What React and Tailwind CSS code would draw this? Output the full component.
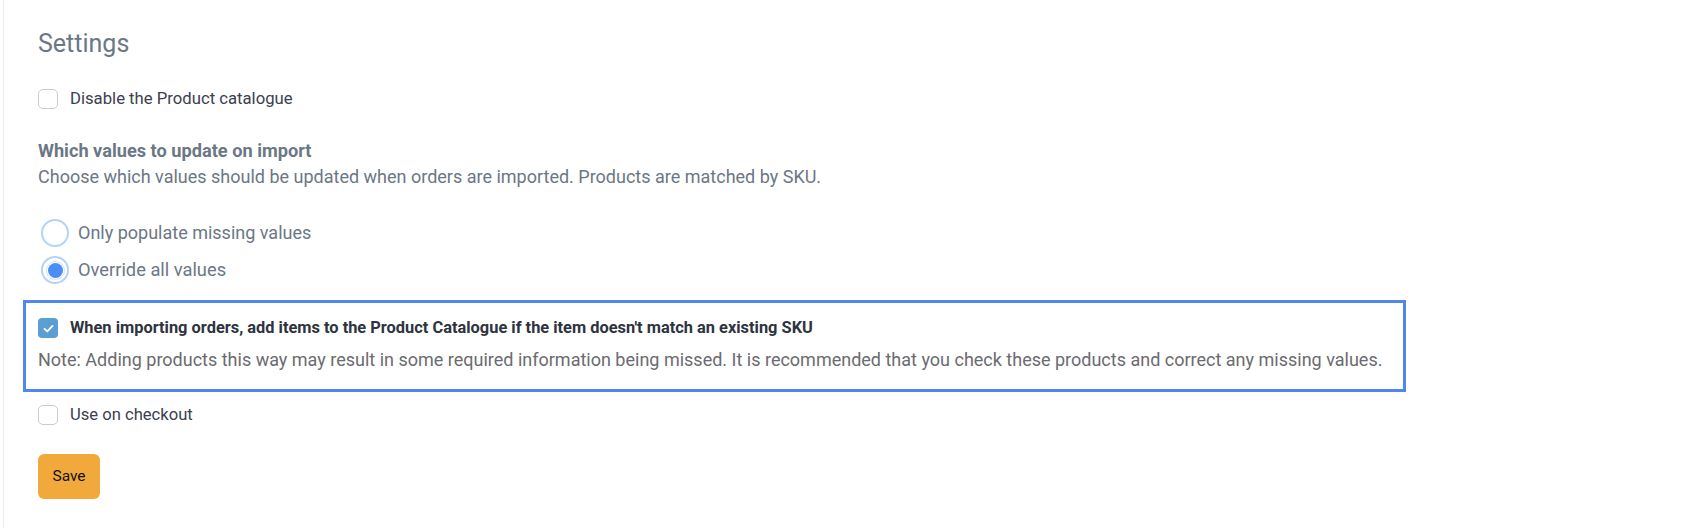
import React from "react";

function Check({ checked }) {
  if (checked) {
    return (
      <span className="flex h-[20px] w-[20px] shrink-0 items-center justify-center rounded-[4px] bg-[#5a9fd4]">
        <svg width="13" height="13" viewBox="0 0 12 12" fill="none">
          <path d="M2.3 6.3 L4.9 8.7 L9.7 3.6" stroke="white" strokeWidth="1.7" strokeLinecap="round" strokeLinejoin="round" />
        </svg>
      </span>
    );
  }
  return <span className="block h-[20px] w-[20px] shrink-0 rounded-[5px] border-[1.5px] border-[#c6ccd3] bg-white" />;
}

function Radio({ checked }) {
  return (
    <span className="flex h-[28px] w-[28px] shrink-0 items-center justify-center rounded-full border-[2px] border-[#b5d3fa] bg-white">
      {checked && (
        <span className="flex h-[19px] w-[19px] items-center justify-center rounded-full border-[1px] border-[#d3e3f7]">
          <span className="block h-[15px] w-[15px] rounded-full bg-[#4b8df5]" />
        </span>
      )}
    </span>
  );
}

export default function App() {
  return (
    <div className="h-[528px] w-[1682px] bg-white font-['Roboto',sans-serif]">
      <div className="ml-[3px] h-full border-l border-[#ededed] pl-[34px] pt-[28px]">
        <h2 className="text-[25px] leading-[32px] text-[#6b7785]">Settings</h2>
        <label className="mt-[29px] flex h-[20px] items-center gap-[12px]">
          <Check />
          <span className="text-[16.7px] leading-[20px] text-[#3b4050]">Disable the Product catalogue</span>
        </label>
        <div className="mt-[29px]">
          <div className="text-[18.2px] font-bold leading-[26px] text-[#6b7785]">Which values to update on import</div>
          <div className="text-[18px] leading-[26px] text-[#6b7785]">
            Choose which values should be updated when orders are imported. Products are matched by SKU.
          </div>
        </div>
        <div className="mt-[29px] flex flex-col gap-[9px] pl-[3px]">
          <label className="flex h-[28px] items-center gap-[9px]">
            <Radio />
            <span className="text-[18px] leading-[28px] text-[#6b7785]">Only populate missing values</span>
          </label>
          <label className="flex h-[28px] items-center gap-[9px]">
            <Radio checked />
            <span className="text-[18.3px] leading-[28px] text-[#6b7785]">Override all values</span>
          </label>
        </div>
        <div className="-ml-[15px] mt-[16px] w-[1383px] border-[3px] border-[#4f87ee] pb-[17px] pl-[12px] pr-[12px] pt-[15px]">
          <label className="flex h-[20px] items-center gap-[12px]">
            <Check checked />
            <span className="text-[16.4px] font-bold leading-[20px] text-[#2e3340]">
              When importing orders, add items to the Product Catalogue if the item doesn't match an existing SKU
            </span>
          </label>
          <div className="mt-[10px] whitespace-nowrap text-[18px] leading-[24px] text-[#6b6b6f]">
            Note: Adding products this way may result in some required information being missed. It is recommended that you check these products and correct any missing values.
          </div>
        </div>
        <label className="mt-[13px] flex h-[20px] items-center gap-[12px]">
          <Check />
          <span className="text-[16.6px] leading-[20px] text-[#3b4050]">Use on checkout</span>
        </label>
        <button className="mt-[29px] flex h-[45px] w-[62px] items-center justify-center rounded-[6px] bg-[#f2a93c] text-[15.5px] text-[#111]">
          Save
        </button>
      </div>
    </div>
  );
}
